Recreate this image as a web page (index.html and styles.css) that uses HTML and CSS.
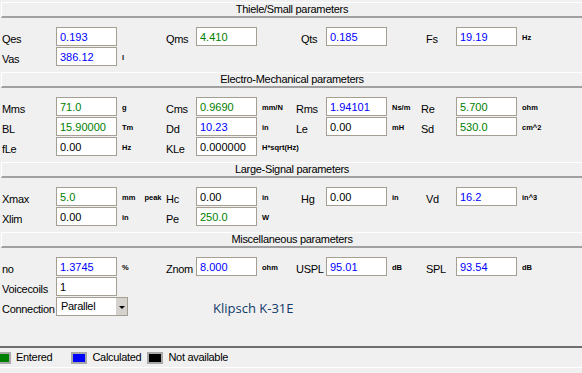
FILE: index.html
```html
<!DOCTYPE html>
<html lang="en">

<head>
    <meta charset="UTF-8">
    <meta name="viewport" content="width=device-width, initial-scale=1.0">
    <title>Driver Parameters</title>
    <link rel="stylesheet" href="styles.css">
</head>

<body>
    <div class="section">
        <div class="header">Thiele/Small parameters</div>
        <div class="rows">
            <div class="row">
                <span class="label">Qes</span><input class="field calc" value="0.193" readonly><span class="unit"></span>
                <span class="label">Qms</span><input class="field entered" value="4.410" readonly><span class="unit"></span>
                <span class="label pad">Qts</span><input class="field calc" value="0.185" readonly><span class="unit"></span>
                <span class="label pad">Fs</span><input class="field calc" value="19.19" readonly><span class="unit">Hz</span>
            </div>
            <div class="row">
                <span class="label">Vas</span><input class="field calc" value="386.12" readonly><span class="unit">l</span>
            </div>
        </div>
    </div>

    <div class="section">
        <div class="header">Electro-Mechanical parameters</div>
        <div class="rows">
            <div class="row">
                <span class="label">Mms</span><input class="field entered" value="71.0" readonly><span class="unit">g</span>
                <span class="label">Cms</span><input class="field entered" value="0.9690" readonly><span class="unit">mm/N</span>
                <span class="label">Rms</span><input class="field calc" value="1.94101" readonly><span class="unit">Ns/m</span>
                <span class="label">Re</span><input class="field entered" value="5.700" readonly><span class="unit">ohm</span>
            </div>
            <div class="row">
                <span class="label">BL</span><input class="field entered" value="15.90000" readonly><span class="unit">Tm</span>
                <span class="label">Dd</span><input class="field calc" value="10.23" readonly><span class="unit">in</span>
                <span class="label">Le</span><input class="field" value="0.00" readonly><span class="unit">mH</span>
                <span class="label">Sd</span><input class="field entered" value="530.0" readonly><span class="unit">cm^2</span>
            </div>
            <div class="row">
                <span class="label">fLe</span><input class="field" value="0.00" readonly><span class="unit">Hz</span>
                <span class="label">KLe</span><input class="field" value="0.000000" readonly><span class="unit">H*sqrt(Hz)</span>
            </div>
        </div>
    </div>

    <div class="section">
        <div class="header">Large-Signal parameters</div>
        <div class="rows">
            <div class="row">
                <span class="label">Xmax</span><input class="field entered" value="5.0" readonly><span class="unit">mm <span class="peak">peak</span></span>
                <span class="label">Hc</span><input class="field" value="0.00" readonly><span class="unit">in</span>
                <span class="label pad">Hg</span><input class="field" value="0.00" readonly><span class="unit">in</span>
                <span class="label pad">Vd</span><input class="field calc" value="16.2" readonly><span class="unit">in^3</span>
            </div>
            <div class="row">
                <span class="label">Xlim</span><input class="field" value="0.00" readonly><span class="unit">in</span>
                <span class="label">Pe</span><input class="field entered" value="250.0" readonly><span class="unit">W</span>
            </div>
        </div>
    </div>

    <div class="section">
        <div class="header">Miscellaneous parameters</div>
        <div class="rows">
            <div class="row">
                <span class="label">no</span><input class="field calc" value="1.3745" readonly><span class="unit">%</span>
                <span class="label">Znom</span><input class="field calc" value="8.000" readonly><span class="unit">ohm</span>
                <span class="label">USPL</span><input class="field calc" value="95.01" readonly><span class="unit">dB</span>
                <span class="label pad">SPL</span><input class="field calc" value="93.54" readonly><span class="unit">dB</span>
            </div>
            <div class="row">
                <span class="label">Voicecoils</span><input class="field" value="1" readonly>
            </div>
            <div class="row">
                <span class="label">Connection</span>
                <div class="combo">
                    <span class="combo-text">Parallel</span>
                    <span class="combo-btn"><span class="arrow"></span></span>
                </div>
                <span class="model">Klipsch K-31E</span>
            </div>
        </div>
    </div>

    <div class="legend">
        <span class="swatch green first"></span><span class="legend-text gap-wide">Entered</span>
        <span class="swatch blue"></span><span class="legend-text">Calculated</span>
        <span class="swatch black"></span><span class="legend-text">Not available</span>
    </div>
</body>

</html>
```

FILE: styles.css
```css
body {
    background-color: #f0f0f0;
    color: #000;
    font-family: "Liberation Sans", Arial, sans-serif;
    font-size: 11px;
    letter-spacing: -0.3px;
    margin: 0;
    padding: 2px 0 0;
    overflow: hidden;
}

.header {
    margin-left: 1px;
    height: 13px;
    line-height: 13px;
    text-align: center;
    border-top: 1px solid #ffffff;
    border-left: 1px solid #ffffff;
    border-bottom: 2px solid #a0a0a0;
    margin-bottom: 9px;
}

.rows {
    display: flex;
    flex-direction: column;
    gap: 1px;
    margin-bottom: 6px;
}

.row {
    display: grid;
    grid-template-columns: 54px 61px 49px 30px 61px 39px 30px 61px 34px 35px 61px 1fr;
    grid-template-rows: 19px;
    padding-left: 2px;
}

.label {
    line-height: 19px;
    padding-top: 3px;
    white-space: nowrap;
}

.label.pad {
    padding-left: 5px;
}

.field {
    box-sizing: border-box;
    width: 61px;
    height: 19px;
    margin: 0;
    padding: 0 3px;
    border: 1px solid #a59e92;
    background-color: #ffffff;
    color: #000;
    font-family: "Liberation Sans", Arial, sans-serif;
    font-size: 11px;
    line-height: 17px;
    outline: none;
}

.field.entered {
    color: #008000;
}

.field.calc {
    color: #0000ff;
}

.unit {
    padding-left: 5px;
    padding-top: 3px;
    font-size: 7.5px;
    font-weight: bold;
    letter-spacing: 0;
    line-height: 16px;
    white-space: nowrap;
}

.peak {
    margin-left: 7px;
}

.combo {
    grid-column: 2 / 4;
    display: flex;
    box-sizing: border-box;
    width: 72px;
    height: 19px;
    border: 1px solid #a59e92;
    background-color: #ffffff;
}

.combo-text {
    flex: 1;
    padding-left: 4px;
    line-height: 17px;
}

.combo-btn {
    width: 11px;
    background-color: #d6d3ce;
    display: flex;
    align-items: center;
    justify-content: center;
}

.arrow {
    width: 0;
    height: 0;
    border-left: 3px solid transparent;
    border-right: 3px solid transparent;
    border-top: 3px solid #000;
    margin-top: 1px;
}

.model {
    grid-column: 5 / -1;
    padding-left: 17px;
    padding-top: 2px;
    font-family: "Open Sans", sans-serif;
    font-size: 13px;
    letter-spacing: 0;
    line-height: 19px;
    color: #123a6b;
    white-space: nowrap;
}

.legend {
    display: flex;
    align-items: center;
    margin-top: 30px;
    height: 19px;
    border-top: 2px solid #6e6e6e;
    border-bottom: 1px solid #ffffff;
}

.swatch {
    box-sizing: border-box;
    width: 16px;
    height: 12px;
    border: 2px solid #a8a8a8;
}

.swatch.first {
    margin-left: -5px;
}

.green {
    background-color: #008000;
}

.blue {
    background-color: #0000ff;
}

.black {
    background-color: #000000;
}

.legend-text {
    line-height: 19px;
    margin-left: 5px;
    margin-right: 6px;
}

.legend-text.gap-wide {
    margin-right: 19px;
}
```
